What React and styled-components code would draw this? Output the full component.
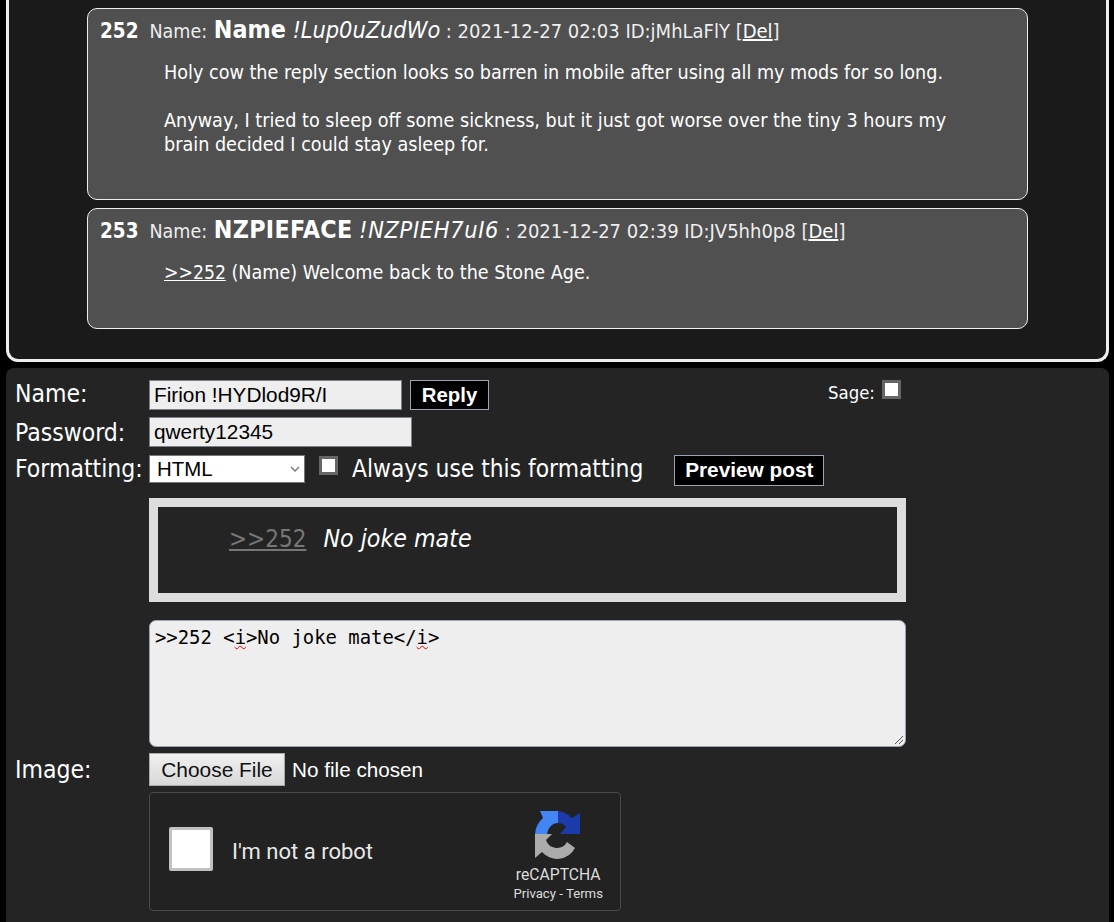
import React from 'react';
import styled, { createGlobalStyle } from 'styled-components';

const GlobalStyle = createGlobalStyle`
  html, body {
    margin: 0;
    height: 922px;
    overflow: hidden;
    background: #000;
  }
  body {
    font-family: "DejaVu Sans Condensed", "DejaVu Sans", Tahoma, sans-serif;
    color: #fff;
  }
`;

const Page = styled.div`
  padding: 0 5px 0 6px;
`;

const Thread = styled.section`
  box-sizing: border-box;
  height: 362px;
  padding: 8px 78px 0 78px;
  background: #1a1a1a;
  border: solid #eee;
  border-width: 0 3px 3px 3px;
  border-radius: 0 0 12px 12px;
`;

const Post = styled.article`
  box-sizing: border-box;
  height: ${p => p.$height}px;
  margin-bottom: 8px;
  padding: 6px 12px;
  background: #505050;
  border: 1px solid #eee;
  border-radius: 10px;
`;

const PostHead = styled.div`
  height: 31px;
  line-height: 29px;
  font-size: 19.5px;
  white-space: nowrap;
  color: #eee;
`;

const PostNumber = styled.b`
  font-size: 20.5px;
  margin-right: 11px;
  color: #fff;
`;

const PosterName = styled.b`
  margin-left: 1px;
  font-size: 24.8px;
  letter-spacing: ${p => p.$spacing || 0}px;
  color: #fff;
`;

const Trip = styled.i`
  margin-left: 1px;
  font-size: 23.3px;
  letter-spacing: ${p => p.$spacing || 0}px;
  color: #fff;
`;

const PostMeta = styled.span`
  font-size: 20px;
  color: #eee;
`;

const DelLink = styled.a`
  color: #fff;
  text-decoration: underline;
`;

const PostBody = styled.div`
  margin: 15px 0 0 64px;
  width: 800px;
  font-size: 19.6px;
  line-height: 24px;
  color: #fff;
`;

const QuoteLink = styled.a`
  font-size: 19.2px;
  color: #fff;
  text-decoration: underline;
`;

const Blank = styled.div`
  height: 24px;
`;

const ReplyForm = styled.form`
  box-sizing: border-box;
  height: 600px;
  margin-top: 6px;
  padding: 12px 9px;
  background: #242424;
  border-radius: 8px;
`;

const Row = styled.div`
  display: flex;
  align-items: flex-start;
  height: ${p => p.$height}px;
`;

const Label = styled.label`
  width: 134px;
  flex: none;
  font-size: 24.5px;
  line-height: ${p => p.$lineHeight || 28}px;
  white-space: nowrap;
`;

const TextField = styled.input`
  box-sizing: border-box;
  width: ${p => p.$width}px;
  height: 30px;
  padding: 0 4px;
  background: #eee;
  border: 1px solid #7a8088;
  color: #000;
  font: 20.8px "Liberation Sans", Arial, sans-serif;
  outline: none;
`;

const BlackButton = styled.button`
  box-sizing: border-box;
  width: ${p => p.$width}px;
  height: ${p => p.$height}px;
  margin-left: ${p => p.$offset}px;
  padding: 0 0 ${p => p.$lift || 0}px;
  background: #000;
  border: 1px solid #9aa4b4;
  color: #fff;
  font: bold ${p => p.$size}px "Liberation Sans", Arial, sans-serif;
`;

const SageWrap = styled.div`
  display: flex;
  align-items: flex-start;
  margin-left: 339px;
  font-size: 18.4px;
  line-height: 26px;
`;

const Check = styled.input.attrs({ type: 'checkbox' })`
  appearance: none;
  box-sizing: border-box;
  width: 19px;
  height: 19px;
  margin: ${p => p.$margin};
  flex: none;
  background: #fff;
  border: 3px solid #666;
`;

const FormatSelect = styled.select`
  appearance: none;
  box-sizing: border-box;
  width: 156px;
  height: 28px;
  padding: 0 3px 0 7px;
  background: #fff url("data:image/svg+xml,%3Csvg xmlns='http://www.w3.org/2000/svg' width='10' height='6'%3E%3Cpath d='M1 1l4 4 4-4' fill='none' stroke='%23777' stroke-width='1.4'/%3E%3C/svg%3E") no-repeat right 4px center;
  border: 1px solid #767676;
  color: #000;
  font: 20.4px "Liberation Sans", Arial, sans-serif;
`;

const AlwaysLabel = styled.span`
  margin-left: 14px;
  font-size: 24.3px;
  line-height: 28px;
  white-space: nowrap;
`;

const PreviewBox = styled.div`
  box-sizing: border-box;
  width: 757px;
  height: 104px;
  margin: 14px 0 18px 134px;
  padding: 17px 71px;
  background: #242424;
  border: 9px solid #ddd;
  font-size: 24.7px;
  line-height: 30px;
  font-style: italic;
`;

const DimQuote = styled.span`
  color: #777;
  font-size: 24px;
  font-style: normal;
  text-decoration: underline;
  margin-right: 17px;
`;

const CodeArea = styled.div`
  position: relative;
  box-sizing: border-box;
  width: 757px;
  height: 127px;
  margin: 0 0 6px 134px;
  padding: 6px 5px;
  background: #eee;
  border: 1px solid #9aa4b4;
  border-radius: 7px;
  color: #000;
  font: 18.9px/20px "DejaVu Sans Mono", monospace;
  white-space: pre;
`;

const Misspelled = styled.span`
  text-decoration: underline wavy #e00;
  text-decoration-thickness: 1px;
`;

const Grip = styled.svg`
  position: absolute;
  right: 1px;
  bottom: 1px;
  width: 10px;
  height: 10px;
`;

const FileButton = styled.button`
  box-sizing: border-box;
  width: 136px;
  height: 33px;
  background: linear-gradient(#f0f0f0, #d8d8d8);
  border: 1px solid #aaa;
  color: #111;
  font: 20.9px "Liberation Sans", Arial, sans-serif;
`;

const FileStatus = styled.span`
  margin-left: 7px;
  font: 20.7px/33px "Liberation Sans", Arial, sans-serif;
`;

const Captcha = styled.div`
  box-sizing: border-box;
  display: flex;
  align-items: center;
  width: 472px;
  height: 119px;
  margin: 6px 0 0 134px;
  padding: 0 17px 0 19px;
  background: #222;
  border: 1px solid #4a4a4a;
  border-radius: 4px;
`;

const CaptchaBox = styled.div`
  box-sizing: border-box;
  width: 44px;
  height: 44px;
  margin-bottom: 6px;
  background: #fff;
  border: 3px solid #c1c1c1;
  border-radius: 2px;
`;

const CaptchaText = styled.span`
  margin-left: 19px;
  flex: 1;
  font: 22px Roboto, sans-serif;
  color: #e8e8e8;
`;

const CaptchaBrand = styled.div`
  display: flex;
  flex-direction: column;
  align-items: center;
  margin-top: 10px;
  color: #ddd;
  font-family: Roboto, sans-serif;
`;

const BrandName = styled.div`
  margin-top: 6px;
  font-size: 15.7px;
  line-height: 20px;
`;

const BrandLinks = styled.div`
  font-size: 13.2px;
  line-height: 18px;
  white-space: nowrap;
`;

const RecaptchaLogo = () => (
  <svg width="46" height="48" viewBox="0 0 46 48">
    <path fill="#1c3aa9" d="M23 0A24 24 0 0 1 37 7L45 2V23H25L31 16A11 11 0 0 0 23 12Z" />
    <path fill="#4285f4" d="M23 0H5L8 7A23 23 0 0 0 0 23H12A12 12 0 0 1 15 16A11 11 0 0 1 23 12Z" />
    <path fill="#ababab" d="M0 23H17L11 29A11.5 11.5 0 0 0 32 31L40 37A20 20 0 0 1 7 41L0 47Z" />
  </svg>
);

export default function App() {
  return (
    <Page>
      <GlobalStyle />
      <Thread>
        <Post $height={192}>
          <PostHead>
            <PostNumber>252</PostNumber>Name: <PosterName>Name</PosterName> <Trip>!Lup0uZudWo</Trip> <PostMeta>: 2021-12-27 02:03 ID:jMhLaFlY [<DelLink>Del</DelLink>]</PostMeta>
          </PostHead>
          <PostBody>
            Holy cow the reply section looks so barren in mobile after using all my mods for so long.
            <Blank />
            Anyway, I tried to sleep off some sickness, but it just got worse over the tiny 3 hours my brain decided I could stay asleep for.
          </PostBody>
        </Post>
        <Post $height={121}>
          <PostHead>
            <PostNumber>253</PostNumber>Name: <PosterName $spacing={0.3}>NZPIEFACE</PosterName> <Trip $spacing={0.7}>!NZPIEH7uI6</Trip> <PostMeta>: 2021-12-27 02:39 ID:JV5hh0p8 [<DelLink>Del</DelLink>]</PostMeta>
          </PostHead>
          <PostBody>
            <QuoteLink>&gt;&gt;252</QuoteLink> (Name) Welcome back to the Stone Age.
          </PostBody>
        </Post>
      </Thread>
      <ReplyForm>
        <Row $height={37}>
          <Label>Name:</Label>
          <TextField $width={253} defaultValue="Firion !HYDlod9R/I" />
          <BlackButton type="button" $width={79} $height={30} $offset={8} $size={20.4}>Reply</BlackButton>
          <SageWrap>
            Sage:<Check $margin="0 0 0 7px" />
          </SageWrap>
        </Row>
        <Row $height={38}>
          <Label $lineHeight={32}>Password:</Label>
          <TextField $width={263} defaultValue="qwerty12345" />
        </Row>
        <Row $height={29}>
          <Label>Formatting:</Label>
          <FormatSelect defaultValue="HTML">
            <option>HTML</option>
          </FormatSelect>
          <Check $margin="1px 0 0 14px" />
          <AlwaysLabel>Always use this formatting</AlwaysLabel>
          <BlackButton type="button" $width={150} $height={31} $offset={31} $size={20.8} $lift={2}>Preview post</BlackButton>
        </Row>
        <PreviewBox>
          <DimQuote>&gt;&gt;252</DimQuote>No joke mate
        </PreviewBox>
        <CodeArea>
          &gt;&gt;252 &lt;<Misspelled>i</Misspelled>&gt;No joke mate&lt;/<Misspelled>i</Misspelled>&gt;
          <Grip viewBox="0 0 10 10">
            <path d="M1 9L9 1M5 9L9 5" stroke="#555" strokeWidth="1" />
          </Grip>
        </CodeArea>
        <Row $height={33}>
          <Label $lineHeight={34}>Image:</Label>
          <FileButton type="button">Choose File</FileButton>
          <FileStatus>No file chosen</FileStatus>
        </Row>
        <Captcha>
          <CaptchaBox />
          <CaptchaText>I'm not a robot</CaptchaText>
          <CaptchaBrand>
            <RecaptchaLogo />
            <BrandName>reCAPTCHA</BrandName>
            <BrandLinks>Privacy - Terms</BrandLinks>
          </CaptchaBrand>
        </Captcha>
      </ReplyForm>
    </Page>
  );
}
